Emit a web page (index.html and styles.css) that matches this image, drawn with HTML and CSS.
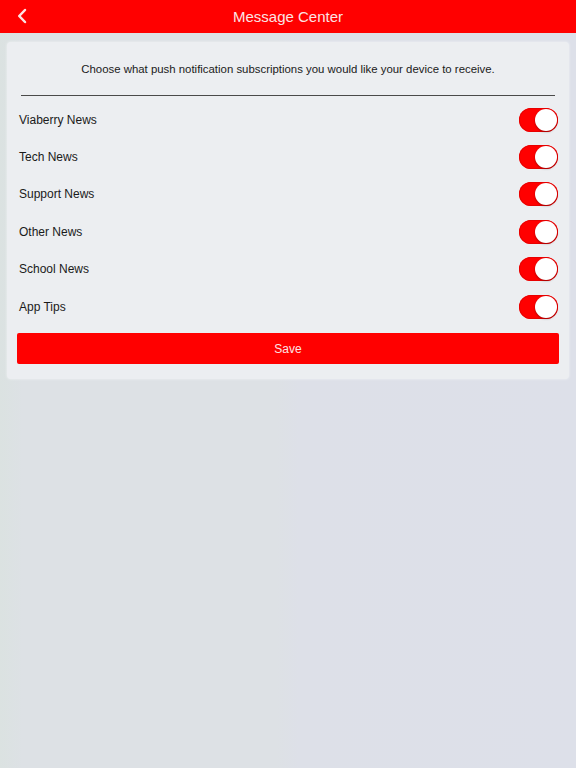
FILE: index.html
```html
<!DOCTYPE html>
<html>
<head>
<meta charset="utf-8">
<link rel="stylesheet" href="styles.css">
</head>
<body>
<header class="topbar">
  <span class="back">
    <svg width="12" height="16" viewBox="0 0 12 16"><path d="M9 2 L3.2 8 L9 14" fill="none" stroke="#fde3e3" stroke-width="2.5" stroke-linecap="round" stroke-linejoin="round"/></svg>
  </span>
  <h1 class="title">Message Center</h1>
</header>
<main class="card">
  <p class="intro">Choose what push notification subscriptions you would like your device to receive.</p>
  <hr class="divider">
  <ul class="list">
    <li class="row"><span class="label">Viaberry News</span><span class="toggle"><span class="knob"></span></span></li>
    <li class="row"><span class="label">Tech News</span><span class="toggle"><span class="knob"></span></span></li>
    <li class="row"><span class="label">Support News</span><span class="toggle"><span class="knob"></span></span></li>
    <li class="row"><span class="label">Other News</span><span class="toggle"><span class="knob"></span></span></li>
    <li class="row"><span class="label">School News</span><span class="toggle"><span class="knob"></span></span></li>
    <li class="row"><span class="label">App Tips</span><span class="toggle"><span class="knob"></span></span></li>
  </ul>
  <button class="save">Save</button>
</main>
</body>
</html>
```
FILE: styles.css
```css
* { box-sizing: border-box; }
html, body {
  margin: 0;
  height: 100%;
}
body {
  font-family: "Liberation Sans", Arial, sans-serif;
  background: linear-gradient(90deg, #dbe2e1 0%, #dde1e5 4%, #dde1e5 48%, #dde0e8 52%, #dde0e9 100%);
  color: #1c1c1c;
}
.topbar {
  height: 33px;
  background: #ff0000;
  display: flex;
  align-items: center;
  justify-content: center;
  position: relative;
}
.back {
  position: absolute;
  left: 16px;
  top: 8px;
  display: flex;
}
.title {
  margin: 0;
  font-size: 15px;
  font-weight: normal;
  color: #fbe4e4;
}
.card {
  margin: 9px 7px 0;
  background: #eceef1;
  border-radius: 4px;
  box-shadow: 0 0 3px rgba(255,255,255,0.6);
  padding: 20px 10px 15px;
  display: flex;
  flex-direction: column;
}
.intro {
  margin: 0;
  text-align: center;
  font-size: 11.4px;
  line-height: 14px;
  color: #1a1a1a;
}
.divider {
  margin: 19px 4px 5px;
  border: 0;
  height: 1px;
  background: #4a4a4a;
}
.list {
  list-style: none;
  margin: 0;
  padding: 0;
}
.row {
  height: 37.4px;
  display: flex;
  align-items: center;
  justify-content: space-between;
  padding: 0 1px 0 2px;
}
.label {
  font-size: 12px;
  color: #1a1a1a;
}
.toggle {
  width: 39px;
  height: 24px;
  border-radius: 12px;
  background: #ff0000;
  box-shadow: inset 0 0 0 1px #e80000;
  display: flex;
  align-items: center;
  justify-content: flex-end;
  padding: 0 1px;
}
.knob {
  width: 22px;
  height: 22px;
  border-radius: 50%;
  background: #ffffff;
  box-shadow: 0 1px 2px rgba(0,0,0,0.35);
}
.save {
  margin-top: 8px;
  height: 31px;
  border: 0;
  border-radius: 2px;
  background: #ff0000;
  color: #fde4e4;
  font-family: "Liberation Sans", Arial, sans-serif;
  font-size: 12px;
}
```
